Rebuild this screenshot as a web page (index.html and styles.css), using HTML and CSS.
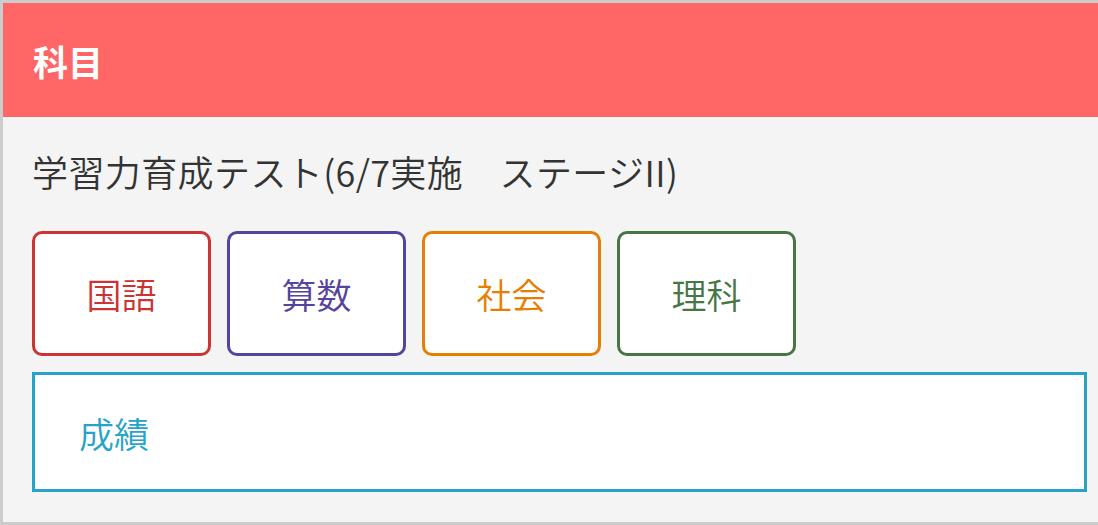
FILE: index.html
```html
<!DOCTYPE html>
<html lang="ja">
<head>
    <meta charset="UTF-8">
    <meta name="viewport" content="width=device-width, initial-scale=1.0">
    <title>科目</title>
    <link rel="stylesheet" href="styles.css">
</head>
<body>
    <section class="panel">
        <header class="panel-head">
            <h2 class="panel-title">科目</h2>
        </header>

        <div class="panel-body">
            <p class="test-name">学習力育成テスト(6/7実施　ステージII)</p>

            <!-- 科目ボタン -->
            <div class="subjects">
                <a class="subject subject-kokugo" href="#">国語</a>
                <a class="subject subject-sansu" href="#">算数</a>
                <a class="subject subject-shakai" href="#">社会</a>
                <a class="subject subject-rika" href="#">理科</a>
            </div>

            <a class="result" href="#">成績</a>
        </div>
    </section>
</body>
</html>
```

FILE: styles.css
```css
/* 基本リセット */
* {
    margin: 0;
    padding: 0;
    box-sizing: border-box;
}

body {
    font-family: "Noto Sans CJK JP", "Noto Sans", sans-serif;
    font-weight: 350;
    color: #333;
    background-color: #fff;
}

a {
    text-decoration: none;
}

/* パネル全体 */
.panel {
    border-top: 3px solid #ccc;
    border-left: 3px solid #ccc;
    border-bottom: 3px solid #ccc;
    background-color: #f4f4f4;
}

.panel-head {
    height: 114px;
    display: flex;
    align-items: center;
    padding-left: 30px;
    background-color: #ff6666;
}

.panel-title {
    font-size: 35px;
    font-weight: bold;
    color: #fff;
    line-height: 1;
}

.panel-body {
    padding: 27px 11px 30px 29px;
}

.test-name {
    font-size: 36px;
    line-height: 54px;
    letter-spacing: 0.4px;
    margin-bottom: 33px;
    color: #333;
}

/* 科目ボタン */
.subjects {
    display: flex;
    gap: 16px;
    margin-bottom: 16px;
}

.subject {
    width: 179px;
    height: 125px;
    display: flex;
    align-items: center;
    justify-content: center;
    font-size: 35px;
    background-color: #fff;
    border: 3px solid;
    border-radius: 10px;
}

.subject-kokugo {
    color: #cc3333;
    border-color: #cc3333;
}

.subject-sansu {
    color: #55449c;
    border-color: #55449c;
}

.subject-shakai {
    color: #e67e00;
    border-color: #e67e00;
}

.subject-rika {
    color: #467646;
    border-color: #467646;
}

/* 成績 */
.result {
    display: flex;
    align-items: center;
    height: 120px;
    padding-left: 44px;
    font-size: 35px;
    color: #28a3c8;
    background-color: #fff;
    border: 3px solid #28a3c8;
}
```
